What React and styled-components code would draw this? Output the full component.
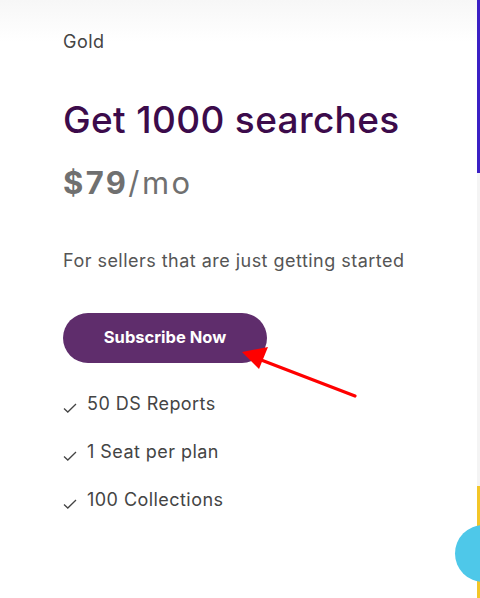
import React from "react";
import styled, { createGlobalStyle } from "styled-components";

const GlobalStyle = createGlobalStyle`
  html, body {
    margin: 0;
    padding: 0;
    background: #fff;
  }
  body {
    font-family: Inter, "Liberation Sans", Arial, sans-serif;
  }
`;

const features = ["50 DS Reports", "1 Seat per plan", "100 Collections"];

const App = () => {
  return (
    <Page>
      <GlobalStyle />
      <Card>
        <Tier>Gold</Tier>
        <Title>Get 1000 searches</Title>
        <Price>
          <strong>$79</strong>/mo
        </Price>
        <Blurb>For sellers that are just getting started</Blurb>
        <SubscribeButton>Subscribe Now</SubscribeButton>
        <Features>
          {features.map((f) => (
            <Feature key={f}>
              <svg width="14" height="10" viewBox="0 0 14 10">
                <path
                  d="M1 5.5 L4.8 9 L13 1"
                  fill="none"
                  stroke="#444"
                  strokeWidth="1.3"
                />
              </svg>
              <span>{f}</span>
            </Feature>
          ))}
        </Features>
        <Pointer width="480" height="598" viewBox="0 0 480 598">
          <line x1="355" y1="396" x2="256" y2="358" stroke="#f00" strokeWidth="3.2" strokeLinecap="round" />
          <polygon points="242,352 268,347 259,369" fill="#f00" />
        </Pointer>
      </Card>
      <Edge>
        <EdgePart $color="#3b20c4" $height="173px" />
        <EdgePart $color="#f4f4f4" $height="313px" />
        <EdgePart $color="#f3c628" $grow />
      </Edge>
      <Bubble />
    </Page>
  );
};

export default App;

const Page = styled.div`
  position: relative;
  display: flex;
  width: 480px;
  height: 598px;
  overflow: hidden;
  background: linear-gradient(#f7f7f7 0px, #ffffff 42px);
`;

const Card = styled.div`
  position: relative;
  flex: 1;
  padding: 30px 0 0 63px;
  color: #444;
`;

const Tier = styled.div`
  font-size: 18px;
  line-height: 24px;
  letter-spacing: 0.5px;
`;

const Title = styled.h1`
  margin: 44px 0 0;
  font-size: 37px;
  line-height: 44px;
  font-weight: 500;
  letter-spacing: 0.35px;
  color: #3c0b4b;
`;

const Price = styled.div`
  margin-top: 21px;
  font-size: 31px;
  line-height: 40px;
  letter-spacing: 2.4px;
  color: #707070;
  strong {
    font-weight: 700;
  }
`;

const Blurb = styled.p`
  margin: 46px 0 0;
  font-size: 18px;
  line-height: 24px;
  letter-spacing: 0.47px;
  color: #555;
`;

const SubscribeButton = styled.button`
  display: block;
  margin-top: 40px;
  width: 204px;
  height: 50px;
  padding: 0 0 2px;
  border: none;
  border-radius: 25px;
  background: #5f2d6c;
  color: #fff;
  font-family: inherit;
  font-size: 16.5px;
  font-weight: 700;
  cursor: pointer;
`;

const Features = styled.ul`
  list-style: none;
  margin: 29px 0 0;
  padding: 0;
  display: flex;
  flex-direction: column;
  gap: 24px;
`;

const Feature = styled.li`
  display: flex;
  align-items: center;
  gap: 10px;
  font-size: 18px;
  line-height: 24px;
  letter-spacing: 0.45px;
  color: #444;
  svg {
    margin-top: 8px;
  }
`;

const Pointer = styled.svg`
  position: absolute;
  left: 0;
  top: 0;
  pointer-events: none;
`;

const Edge = styled.div`
  width: 3px;
  display: flex;
  flex-direction: column;
`;

const EdgePart = styled.div`
  background: ${(p) => p.$color};
  height: ${(p) => p.$height || "auto"};
  flex: ${(p) => (p.$grow ? 1 : "none")};
`;

const Bubble = styled.div`
  position: absolute;
  left: 455px;
  top: 525px;
  width: 57px;
  height: 57px;
  border-radius: 50%;
  background: #4ec8e9;
`;
